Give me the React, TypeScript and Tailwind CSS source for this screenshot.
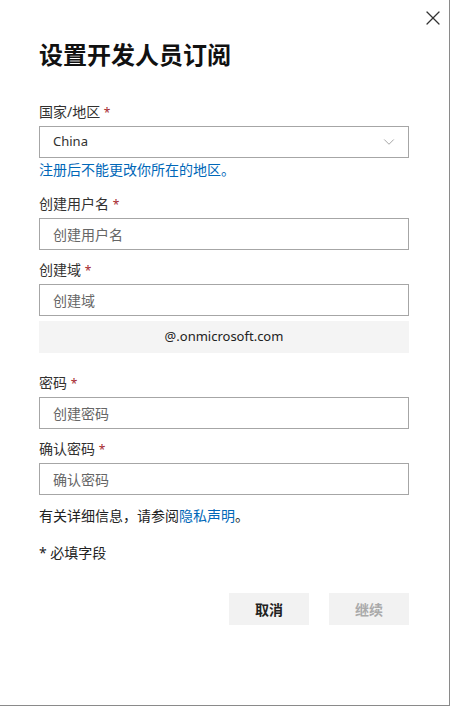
import { X, ChevronDown } from "lucide-react";

const font = { fontFamily: '"Noto Sans", "Noto Sans CJK SC", sans-serif' };

const Label = ({ text }: { text: string }) => (
  <div className="h-5 leading-5 text-[14px] text-[#323130]">
    {text} <span className="text-[12px] text-[#a4262c]">*</span>
  </div>
);

const Field = ({ placeholder }: { placeholder: string }) => (
  <div className="mt-1 h-8 border border-[#a6a6a6] flex items-center px-[13px] text-[14px] text-[#666]">
    {placeholder}
  </div>
);

export default function App() {
  return (
    <div
      className="relative w-[450px] h-[706px] bg-white border-r border-b border-[#8a8a8a] overflow-hidden"
      style={font}
    >
      <button className="absolute right-[4px] top-[6px] text-[#333]">
        <X className="w-6 h-6" strokeWidth={1.2} />
      </button>

      <div className="pl-[39px] pr-[40px] pt-[39px]">
        <h1 className="text-[24px] leading-8 font-bold text-[#111]">设置开发人员订阅</h1>

        <div className="mt-[31px]">
          <Label text="国家/地区" />
          <div className="mt-1 h-8 border border-[#a6a6a6] flex items-center justify-between pl-[13px] pr-[10px] text-[13px] text-[#323130]">
            <span>China</span>
            <ChevronDown className="w-[18px] h-[18px] text-[#888]" strokeWidth={1} />
          </div>
          <div className="mt-[2px] h-5 leading-5 text-[14px] text-[#0067b8]">注册后不能更改你所在的地区。</div>
        </div>

        <div className="mt-[14px]">
          <Label text="创建用户名" />
          <Field placeholder="创建用户名" />
        </div>

        <div className="mt-[10px]">
          <Label text="创建域" />
          <Field placeholder="创建域" />
          <div className="mt-[5px] h-8 bg-[#f4f4f4] flex items-center justify-center text-[13px] text-[#222]">
            @.onmicrosoft.com
          </div>
        </div>

        <div className="mt-[20px]">
          <Label text="密码" />
          <Field placeholder="创建密码" />
        </div>

        <div className="mt-[10px]">
          <Label text="确认密码" />
          <Field placeholder="确认密码" />
        </div>

        <div className="mt-[11px] h-5 leading-5 text-[14px] text-[#222]">
          有关详细信息，请参阅<span className="text-[#0067b8]">隐私声明</span>。
        </div>

        <div className="mt-[17px] h-5 leading-5 text-[14px] text-[#222]">* 必填字段</div>

        <div className="mt-[30px] flex justify-end gap-5">
          <button className="w-20 h-8 bg-[#f2f2f2] text-[14px] font-bold text-[#222]">取消</button>
          <button className="w-20 h-8 bg-[#f2f2f2] text-[14px] font-bold text-[#aaa]">继续</button>
        </div>
      </div>
    </div>
  );
}
